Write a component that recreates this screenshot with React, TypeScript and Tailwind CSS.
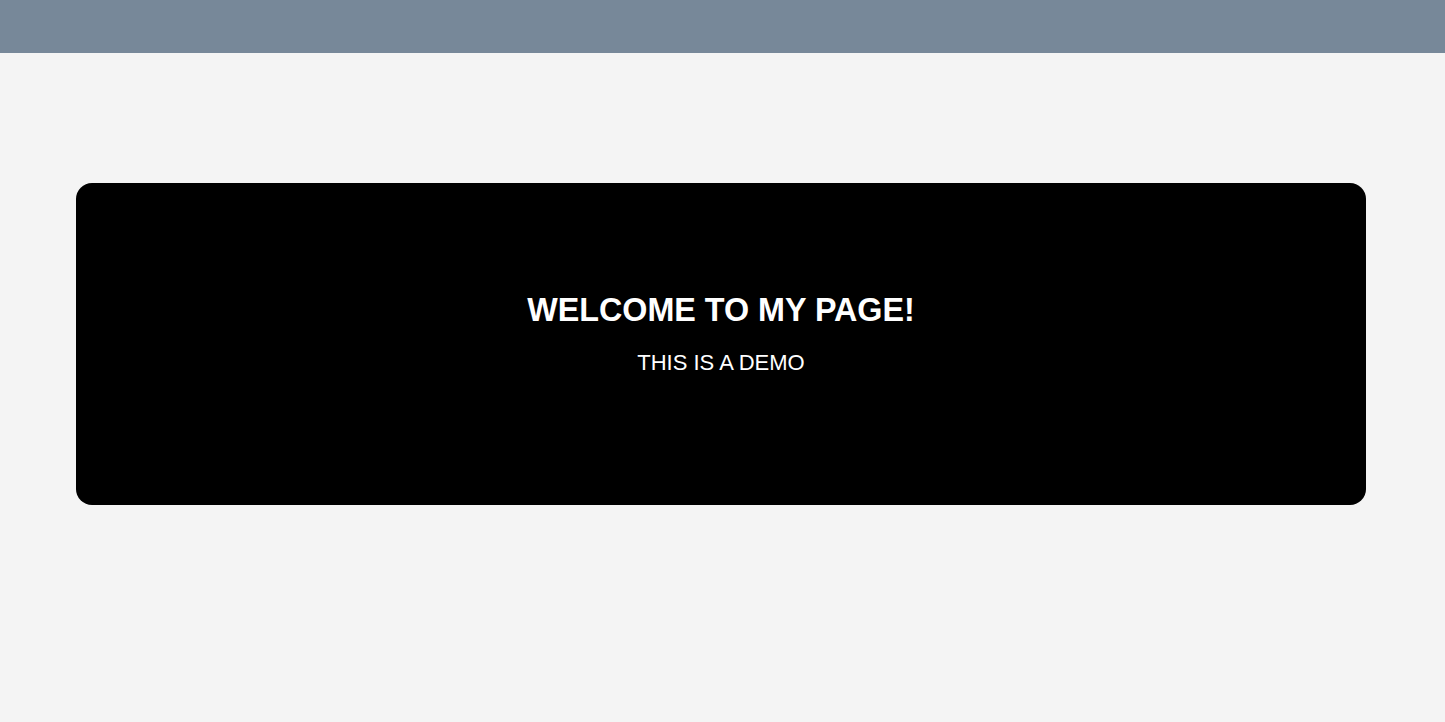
export default function App() {
  return (
    <div className="min-h-[722px] bg-[#f4f4f4] font-['Liberation_Sans',Arial,sans-serif]">
      <header className="h-[53px] bg-[#778899]" />
      <main className="pl-[76px] pr-[79px] pt-[130px]">
        <section className="flex h-[322px] flex-col items-center rounded-2xl bg-black pt-[109px] text-white">
          <h1 className="text-[32.3px] font-bold leading-[37px]">WELCOME TO MY PAGE!</h1>
          <p className="mt-[21px] text-[22px] leading-[25px]">THIS IS A DEMO</p>
        </section>
      </main>
    </div>
  )
}
